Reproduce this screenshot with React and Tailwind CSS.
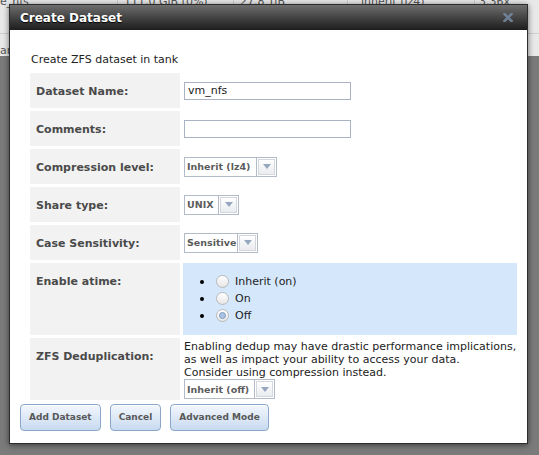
import React from 'react';

// little down-pointing triangle used by the select buttons
const Caret = () => (
    <svg width="8" height="5" viewBox="0 0 8 5">
        <path d="M0 0 H8 L4 5 Z" fill="#97a7c0" />
    </svg>
);

const Select = ({ label, boxClass }) => (
    <div className="inline-flex h-[20px] border border-[#b3bbc8] bg-white">
        <div className={`flex items-center pl-[2px] text-[9.5px] font-bold text-[#5c5c5c] ${boxClass}`}>
            {label}
        </div>
        <div className="flex w-[20px] border-l border-[#b3bbc8] p-[1px]">
            <div className="flex flex-1 items-center justify-center border border-[#d4d8de] bg-gradient-to-b from-white to-[#e9ebee]">
                <Caret />
            </div>
        </div>
    </div>
);

const Radio = ({ checked }) => (
    <span className="flex h-[13px] w-[13px] items-center justify-center rounded-full border border-[#b9b9b9] bg-gradient-to-b from-white to-[#e6e6e6]">
        {checked && <span className="h-[7px] w-[7px] rounded-full border border-[#7d9cc2] bg-[#a9c3e0]" />}
    </span>
);

const Label = ({ children }) => (
    <div className="bg-[#f2f2f2] pl-[6px] pt-[12px] text-[11px] font-bold leading-[13px] text-[#4a4a4a]">
        {children}
    </div>
);

const Button = ({ children }) => (
    <button className="h-[27px] rounded-[4px] border border-[#8aa7c7] bg-gradient-to-b from-[#f3f7fc] to-[#c8daf0] px-[8px] text-[9px] font-bold text-[#585858] shadow-[inset_0_1px_0_#ffffff]">
        {children}
    </button>
);

export default function App() {
    const atime = [
        { text: 'Inherit (on)', checked: false },
        { text: 'On', checked: false },
        { text: 'Off', checked: true },
    ];

    return (
        <div className="relative h-[455px] w-[539px] overflow-hidden bg-[#7b7b7b] font-['DejaVu_Sans',Verdana,sans-serif]">
            {/* page behind the dialog */}
            <div className="h-[56px] bg-[#e9e9e9] text-[11px] text-[#555]">
                <div className="flex h-[34px] border-b border-[#cfcfcf]">
                    <div className="w-[118px] -translate-y-[6px] border-r border-[#cfcfcf]">e_nfs</div>
                    <div className="w-[116px] -translate-y-[6px] border-r border-[#cfcfcf] pl-[6px]">111.0 GiB (0%)</div>
                    <div className="w-[114px] -translate-y-[6px] border-r border-[#cfcfcf] pl-[6px]">27.8 TiB</div>
                    <div className="w-[127px] -translate-y-[6px] border-r border-[#cfcfcf] pl-[13px]">inherit (lz4)</div>
                    <div className="-translate-y-[6px] pl-[4px]">3.36x</div>
                </div>
                <div className="pt-[9px]">ar</div>
            </div>

            {/* dialog */}
            <div className="absolute left-[9px] top-[4px] w-[519px] border border-[#2c2c2c] shadow-[0_1px_6px_rgba(0,0,0,0.55)]">
                <div className="flex h-[25px] items-center justify-between bg-gradient-to-b from-[#6e6e6e] to-[#1e1e1e] pl-[10px] pr-[14px]">
                    <span className="text-[12px] font-bold text-white [text-shadow:0_1px_1px_#000]">Create Dataset</span>
                    <svg width="10" height="9" viewBox="0 0 10 9">
                        <path d="M1.5 1 L8.5 8 M8.5 1 L1.5 8" stroke="#6f8197" strokeWidth="2.6" strokeLinecap="square" />
                    </svg>
                </div>

                <div className="bg-white px-[10px] pb-[12px] pt-[23px]">
                    <div className="ml-[10px]">
                        <p className="mb-[7px] pl-[1px] text-[11px] leading-[13px] text-[#222]">Create ZFS dataset in tank</p>

                        <div className="grid grid-cols-[150px_1fr] gap-[3px] text-[11px] leading-[13px] text-[#222]">
                            <Label>Dataset Name:</Label>
                            <div className="flex h-[35px] items-center pl-[1px]">
                                <div className="flex h-[18px] w-[167px] items-center border border-[#a9b3c4] pl-[3px]">vm_nfs</div>
                            </div>

                            <Label>Comments:</Label>
                            <div className="flex h-[35px] items-center pl-[1px]">
                                <div className="h-[18px] w-[167px] border border-[#a9b3c4]" />
                            </div>

                            <Label>Compression level:</Label>
                            <div className="flex h-[35px] items-center pl-[1px]">
                                <Select label="Inherit (lz4)" boxClass="w-[71px]" />
                            </div>

                            <Label>Share type:</Label>
                            <div className="flex h-[35px] items-center pl-[1px]">
                                <Select label="UNIX" boxClass="w-[33px]" />
                            </div>

                            <Label>Case Sensitivity:</Label>
                            <div className="flex h-[35px] items-center pl-[1px]">
                                <Select label="Sensitive" boxClass="w-[52px]" />
                            </div>

                            <Label>Enable atime:</Label>
                            <ul className="h-[72px] bg-[#d5e8fb] pt-[10px]">
                                {atime.map((item) => (
                                    <li key={item.text} className="flex h-[17px] items-center">
                                        <span className="ml-[17px] h-[4px] w-[4px] rounded-full bg-black" />
                                        <span className="ml-[12px]"><Radio checked={item.checked} /></span>
                                        <span className="ml-[6px]">{item.text}</span>
                                    </li>
                                ))}
                            </ul>

                            <Label>ZFS Deduplication:</Label>
                            <div className="h-[62px] pl-[1px] pt-[2px]">
                                <p>
                                    Enabling dedup may have drastic performance implications,
                                    <br />
                                    as well as impact your ability to access your data.
                                    <br />
                                    Consider using compression instead.
                                </p>
                                <Select label="Inherit (off)" boxClass="w-[69px]" />
                            </div>
                        </div>
                    </div>

                    <div className="mt-[4px] flex gap-[9px]">
                        <Button>Add Dataset</Button>
                        <Button>Cancel</Button>
                        <Button>Advanced Mode</Button>
                    </div>
                </div>
            </div>
        </div>
    );
}
